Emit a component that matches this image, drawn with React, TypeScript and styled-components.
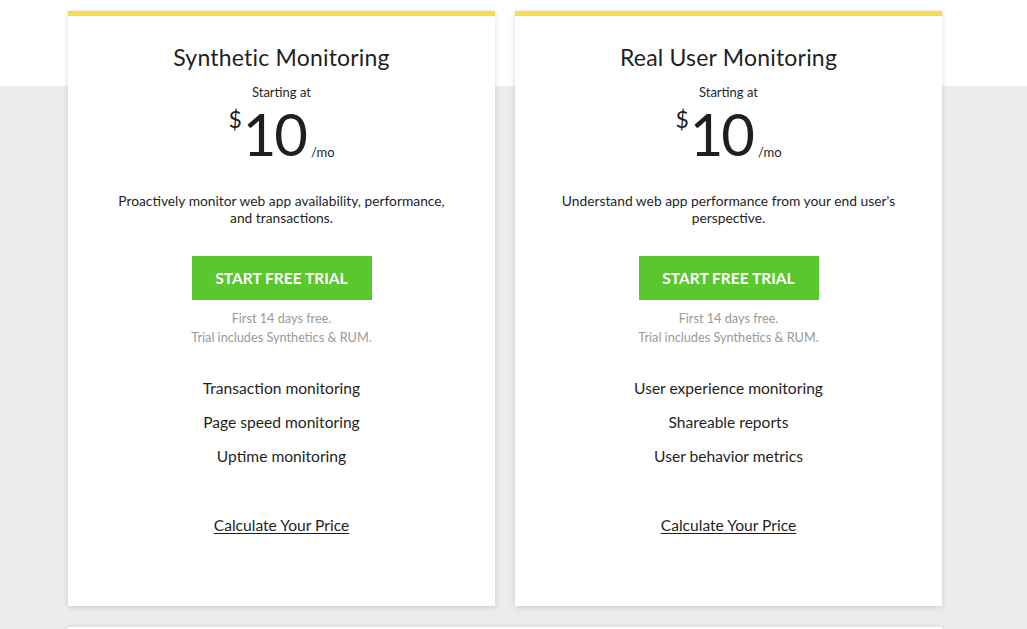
import React from "react";
import styled, { createGlobalStyle } from "styled-components";

const GlobalStyle = createGlobalStyle`
  html, body {
    margin: 0;
    padding: 0;
  }
  body {
    font-family: Lato, "Open Sans", Arial, sans-serif;
    color: #1f1f1f;
    background: linear-gradient(to bottom, #ffffff 86px, #ececec 86px);
    min-height: 100vh;
  }
`;

const Page = styled.div`
  padding: 11px 0 0 68px;
`;

const CardRow = styled.div`
  display: flex;
  gap: 20px;
`;

const Card = styled.div`
  width: 427px;
  height: 595px;
  box-sizing: border-box;
  background: #fff;
  border-top: 5px solid #f9dc4c;
  box-shadow: 0 1px 6px rgba(0, 0, 0, 0.14);
  display: flex;
  flex-direction: column;
  align-items: center;
  text-align: center;
  padding-top: 27px;
`;

const Title = styled.h2`
  margin: 0;
  font-size: 23px;
  font-weight: 400;
  line-height: 28px;
  letter-spacing: 0.2px;
`;

const Starting = styled.div`
  margin-top: 13px;
  font-size: 13px;
  line-height: 16px;
`;

const Price = styled.div`
  display: flex;
  align-items: flex-start;
  margin-top: 8px;
  height: 52px;
`;

const Dollar = styled.span`
  font-size: 23px;
  line-height: 23px;
  margin-right: 1px;
`;

const Amount = styled.span`
  font-size: 58px;
  line-height: 52px;
  font-weight: 400;
  letter-spacing: -2px;
`;

const Per = styled.span`
  font-size: 13px;
  line-height: 16px;
  align-self: flex-end;
  margin-left: 5px;
`;

const Description = styled.p`
  margin: 32px 0 0;
  width: 360px;
  font-size: 13.8px;
  line-height: 17px;
`;

const TrialButton = styled.a`
  margin-top: 30px;
  width: 180px;
  height: 44px;
  background: #5ac72f;
  color: #fff;
  font-size: 15.5px;
  font-weight: 700;
  display: flex;
  align-items: center;
  justify-content: center;
  text-decoration: none;
`;

const Note = styled.div`
  margin-top: 9px;
  font-size: 12.7px;
  line-height: 19px;
  color: #9a9a9a;
`;

const Features = styled.ul`
  list-style: none;
  padding: 0;
  margin: 24px 0 0;
`;

const Feature = styled.li`
  font-size: 15.6px;
  line-height: 34px;
`;

const PriceLink = styled.a`
  margin-top: 43px;
  font-size: 15.6px;
  color: #1f1f1f;
  text-decoration: underline;
  text-underline-offset: 2px;
`;

const NextSection = styled.div`
  margin-top: 21px;
  width: 874px;
  height: 40px;
  background: #fff;
  box-shadow: 0 1px 6px rgba(0, 0, 0, 0.14);
`;

type Plan = {
  title: string;
  description: string[];
  features: string[];
};

const plans: Plan[] = [
  {
    title: "Synthetic Monitoring",
    description: [
      "Proactively monitor web app availability, performance,",
      "and transactions.",
    ],
    features: [
      "Transaction monitoring",
      "Page speed monitoring",
      "Uptime monitoring",
    ],
  },
  {
    title: "Real User Monitoring",
    description: [
      "Understand web app performance from your end user's",
      "perspective.",
    ],
    features: [
      "User experience monitoring",
      "Shareable reports",
      "User behavior metrics",
    ],
  },
];

const PlanCard = ({ plan }: { plan: Plan }) => (
  <Card>
    <Title>{plan.title}</Title>
    <Starting>Starting at</Starting>
    <Price>
      <Dollar>$</Dollar>
      <Amount>10</Amount>
      <Per>/mo</Per>
    </Price>
    <Description>
      {plan.description[0]}
      <br />
      {plan.description[1]}
    </Description>
    <TrialButton href="#">START FREE TRIAL</TrialButton>
    <Note>
      First 14 days free.
      <br />
      Trial includes Synthetics &amp; RUM.
    </Note>
    <Features>
      {plan.features.map(f => (
        <Feature key={f}>{f}</Feature>
      ))}
    </Features>
    <PriceLink href="#">Calculate Your Price</PriceLink>
  </Card>
);

export default function App() {
  return (
    <>
      <GlobalStyle />
      <Page>
        <CardRow>
          {plans.map(p => (
            <PlanCard key={p.title} plan={p} />
          ))}
        </CardRow>
        <NextSection />
      </Page>
    </>
  );
}
